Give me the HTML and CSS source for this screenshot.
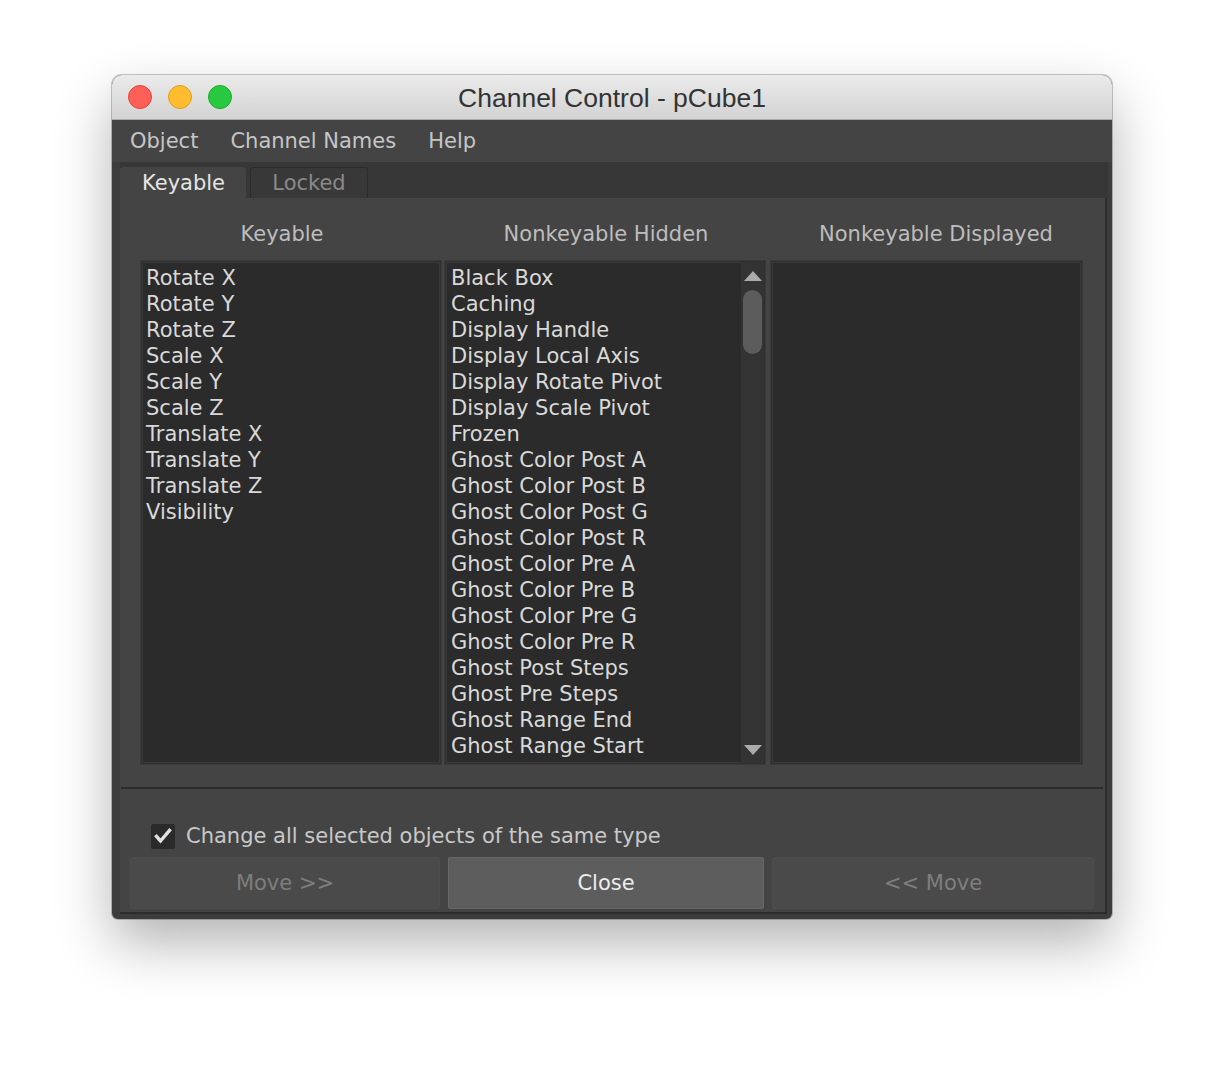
FILE: index.html
```html
<!DOCTYPE html>
<html>
<head>
<meta charset="utf-8">
<link rel="stylesheet" href="styles.css">
</head>
<body>
<div class="window">
  <div class="titlebar">
    <div class="lights">
      <span class="light red"></span>
      <span class="light yellow"></span>
      <span class="light green"></span>
    </div>
    <div class="title">Channel Control - pCube1</div>
  </div>
  <div class="menubar">
    <span class="menu-item">Object</span>
    <span class="menu-item">Channel Names</span>
    <span class="menu-item">Help</span>
  </div>
  <div class="tabs">
    <div class="tab active">Keyable</div>
    <div class="tab">Locked</div>
  </div>
  <div class="panel">
    <div class="headers">
      <div class="header h1">Keyable</div>
      <div class="header h2">Nonkeyable Hidden</div>
      <div class="header h3">Nonkeyable Displayed</div>
    </div>
    <div class="lists">
      <div class="list l1">
        <div class="items">
          <div class="row">Rotate X</div>
          <div class="row">Rotate Y</div>
          <div class="row">Rotate Z</div>
          <div class="row">Scale X</div>
          <div class="row">Scale Y</div>
          <div class="row">Scale Z</div>
          <div class="row">Translate X</div>
          <div class="row">Translate Y</div>
          <div class="row">Translate Z</div>
          <div class="row">Visibility</div>
        </div>
      </div>
      <div class="list l2">
        <div class="items">
          <div class="row">Black Box</div>
          <div class="row">Caching</div>
          <div class="row">Display Handle</div>
          <div class="row">Display Local Axis</div>
          <div class="row">Display Rotate Pivot</div>
          <div class="row">Display Scale Pivot</div>
          <div class="row">Frozen</div>
          <div class="row">Ghost Color Post A</div>
          <div class="row">Ghost Color Post B</div>
          <div class="row">Ghost Color Post G</div>
          <div class="row">Ghost Color Post R</div>
          <div class="row">Ghost Color Pre A</div>
          <div class="row">Ghost Color Pre B</div>
          <div class="row">Ghost Color Pre G</div>
          <div class="row">Ghost Color Pre R</div>
          <div class="row">Ghost Post Steps</div>
          <div class="row">Ghost Pre Steps</div>
          <div class="row">Ghost Range End</div>
          <div class="row">Ghost Range Start</div>
          <div class="row">Ghosting</div>
        </div>
        <div class="scrollbar">
          <span class="arrow up"></span>
          <span class="thumb"></span>
          <span class="spacer"></span>
          <span class="arrow down"></span>
        </div>
      </div>
      <div class="list l3"></div>
    </div>
    <div class="separator"></div>
    <label class="check-row">
      <span class="checkbox">
        <svg viewBox="0 0 24 24" width="24" height="24"><path d="M5.5 12.5 L9.5 17 L18.5 6.5" fill="none" stroke="#e2e2e2" stroke-width="3.4" stroke-linecap="square"/></svg>
      </span>
      <span class="check-label">Change all selected objects of the same type</span>
    </label>
    <div class="buttons">
      <div class="btn b1 disabled">Move &gt;&gt;</div>
      <div class="btn b2 primary">Close</div>
      <div class="btn b3 disabled">&lt;&lt; Move</div>
    </div>
  </div>
</div>
</body>
</html>
```

FILE: styles.css
```css
html, body {
  margin: 0;
  padding: 0;
  background: #ffffff;
}
body {
  padding: 75px 0 0 112px;
  min-height: 1068px;
  box-sizing: border-box;
  font-family: "DejaVu Sans", sans-serif;
}
.window {
  width: 1000px;
  background: #3c3c3c;
  border-radius: 10px 10px 6px 6px;
  box-shadow: 0 24px 55px rgba(0, 0, 0, 0.3), 0 0 0 1px rgba(0, 0, 0, 0.22);
  overflow: hidden;
  padding-bottom: 5px;
}
.titlebar {
  height: 44px;
  background: linear-gradient(#ebebeb, #d3d3d3);
  border-bottom: 1px solid #a9a9a9;
  display: flex;
  align-items: center;
  position: relative;
}
.lights {
  display: flex;
  gap: 16px;
  padding-left: 16px;
}
.light {
  width: 24px;
  height: 24px;
  border-radius: 50%;
  box-sizing: border-box;
}
.red { background: #fe5f57; border: 1px solid #e0443e; }
.yellow { background: #febc2e; border: 1px solid #dea123; }
.green { background: #28c840; border: 1px solid #1aab29; }
.title {
  position: absolute;
  left: 0;
  right: 0;
  text-align: center;
  font-family: "Liberation Sans", Arial, sans-serif;
  font-size: 26.5px;
  color: #333333;
  top: 8px;
  padding-left: 0;
}
.menubar {
  height: 42px;
  background: #444444;
  display: flex;
  align-items: center;
  padding-left: 18px;
  gap: 32px;
}
.menu-item {
  font-size: 21px;
  color: #c6c6c6;
}
.tabs {
  height: 36px;
  background: #373737;
  margin: 0 4px 0 8px;
  display: flex;
  align-items: flex-end;
  gap: 4px;
}
.tab {
  height: 31px;
  box-sizing: border-box;
  padding: 0 21px;
  font-size: 21px;
  color: #8a8a8a;
  line-height: 30px;
  background: #383838;
  border: 1px solid #2c2c2c;
  border-bottom: none;
  border-radius: 3px 3px 0 0;
  width: 118px;
  text-align: center;
}
.tab.active {
  background: #444444;
  color: #e4e4e4;
  border-color: #444444;
  width: 126px;
}
.panel {
  background: #444444;
  margin: 0 5px 0 8px;
  border-right: 2px solid #2c2c2c;
  border-bottom: 2px solid #2c2c2c;
  height: 716px;
  box-sizing: border-box;
  padding-top: 20px;
}
.headers {
  display: flex;
  padding-left: 2px;
  height: 31px;
  align-items: center;
}
.header {
  font-size: 21px;
  color: #bdbdbd;
  text-align: center;
}
.h1 { width: 320px; }
.h2 { width: 328px; }
.h3 { width: 332px; }
.lists {
  display: flex;
  margin: 12px 0 0 21px;
  height: 503px;
}
.list {
  background: #2b2b2b;
  box-sizing: border-box;
  border: 1px solid #2f2f2f;
  box-shadow: 0 0 0 1px #3a3a3a, inset 0 0 0 1px #393939;
  height: 503px;
  overflow: hidden;
  display: flex;
}
.l1 { width: 300px; margin-right: 4px; }
.l2 { width: 320px; margin-right: 6px; }
.l3 { width: 311px; }
.items {
  flex: 1;
  padding: 3px 0 0 4px;
  overflow: hidden;
}
.row {
  font-size: 21px;
  line-height: 26px;
  height: 26px;
  color: #d9d9d9;
  white-space: nowrap;
}
.l2 .items { padding-left: 5px; }
.scrollbar {
  width: 23px;
  background: #333333;
  display: flex;
  flex-direction: column;
  align-items: center;
  padding: 9px 0 8px;
  box-sizing: border-box;
  height: 100%;
}
.arrow {
  width: 0;
  height: 0;
  border-left: 9px solid transparent;
  border-right: 9px solid transparent;
}
.arrow.up { border-bottom: 10px solid #ababab; }
.arrow.down { border-top: 10px solid #ababab; }
.thumb {
  width: 19px;
  height: 64px;
  margin-top: 9px;
  border-radius: 10px;
  background: #5c5c5c;
}
.spacer { flex: 1; }
.separator {
  height: 2px;
  background: #2b2b2b;
  margin: 23px 2px 0 1px;
}
.check-row {
  display: flex;
  align-items: center;
  gap: 11px;
  margin: 34px 0 0 31px;
  height: 26px;
}
.checkbox {
  width: 24px;
  height: 25px;
  background: #2a2a2a;
  border-radius: 2px;
  display: flex;
  align-items: center;
  justify-content: center;
}
.check-label {
  font-size: 21px;
  color: #c9c9c9;
}
.buttons {
  display: flex;
  gap: 8px;
  margin: 8px 0 0 10px;
}
.btn {
  height: 52px;
  box-sizing: border-box;
  border: 1px solid #4d4d4d;
  border-radius: 2px;
  background: #4a4a4a;
  font-size: 21px;
  line-height: 50px;
  text-align: center;
}
.b1 { width: 310px; }
.b2 { width: 316px; }
.b3 { width: 322px; }
.disabled { color: #7e7e7e; }
.primary {
  background: #5d5d5d;
  border-color: #676767;
  color: #ededed;
}
```
